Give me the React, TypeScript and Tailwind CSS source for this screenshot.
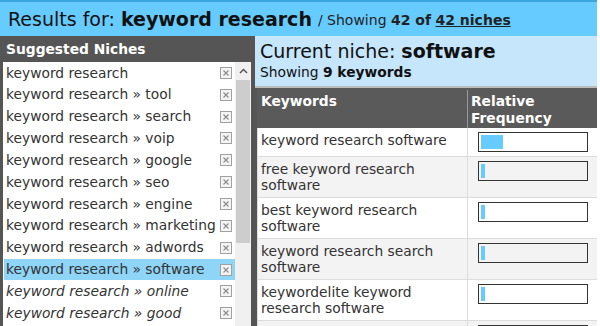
import React from "react";

const NICHES = [
    { label: "keyword research" },
    { label: "keyword research » tool" },
    { label: "keyword research » search" },
    { label: "keyword research » voip" },
    { label: "keyword research » google" },
    { label: "keyword research » seo" },
    { label: "keyword research » engine" },
    { label: "keyword research » marketing" },
    { label: "keyword research » adwords" },
    { label: "keyword research » software", selected: true },
    { label: "keyword research » online", italic: true },
    { label: "keyword research » good", italic: true },
];

// последняя строка уходит за нижний край, видна только рамка шкалы
const KEYWORDS = [
    { text: "keyword research software", freq: 22 },
    { text: "free keyword research software", freq: 4 },
    { text: "best keyword research software", freq: 4 },
    { text: "keyword research search software", freq: 4 },
    { text: "keywordelite keyword research software", freq: 4 },
    { text: "", freq: 4 },
];

function CloseBox() {
    return (
        <svg width="12" height="12" viewBox="0 0 12 12" className="shrink-0">
            <rect x="0.5" y="0.5" width="11" height="11" fill="#f4f4f4" stroke="#a0a0a0" />
            <path d="M3.5 3.5 L8.5 8.5 M8.5 3.5 L3.5 8.5" stroke="#8a8a8a" strokeWidth="1.1" />
        </svg>
    );
}

export default function App() {
    return (
        <div className="w-[597px] h-[326px] overflow-hidden flex flex-col bg-white text-[#333] font-['DejaVu_Sans',Verdana,sans-serif] text-[13.8px]">
            {/* Заголовок результатов */}
            <div className="h-[36px] shrink-0 flex items-center pl-2 bg-[#66ccff] border-t-2 border-[#3aa6e0] text-[#111]">
                <span className="text-[19px]">Results for:&nbsp;</span>
                <span className="text-[19px] font-bold">keyword research</span>
                <span className="ml-[6px] mt-[3px] text-[14px] text-[#222]">
                    / Showing <b>42 of</b> <b className="underline">42 niches</b>
                </span>
            </div>

            <div className="flex flex-1 min-h-0">
                {/* Левая колонка: предложенные ниши */}
                <div className="w-[255px] shrink-0 flex flex-col bg-[#555]">
                    <div className="h-[26px] shrink-0 flex items-center pl-[6px] text-white font-bold">
                        Suggested Niches
                    </div>
                    <div className="flex flex-1 min-h-0 pl-[3px] pr-[4px]">
                        <div className="w-[232px] bg-white pl-[1px]">
                            {NICHES.map((n) => (
                                <div
                                    key={n.label}
                                    className={`h-[21.85px] flex items-center justify-between pl-[2px] pr-[3px] ${n.selected ? "bg-[#8fd5f8]" : ""} ${n.italic ? "italic" : ""}`}
                                >
                                    <span className="whitespace-nowrap">{n.label}</span>
                                    <CloseBox />
                                </div>
                            ))}
                        </div>
                        <div className="w-[16px] bg-[#f0f0f0] flex flex-col">
                            <div className="h-[18px] flex items-center justify-center">
                                <svg width="9" height="6" viewBox="0 0 9 6">
                                    <path d="M1 5 L4.5 1.5 L8 5" fill="none" stroke="#505050" strokeWidth="1.4" />
                                </svg>
                            </div>
                            <div className="mx-[1px] h-[163px] bg-[#cdcdcd]" />
                        </div>
                    </div>
                </div>

                {/* Правая колонка: текущая ниша */}
                <div className="flex-1 flex flex-col min-w-0">
                    <div className="h-[52px] shrink-0 bg-[#c6e6fb] pl-[5px] pt-[4px] text-[#111] border-b-2 border-[#bbb]">
                        <div className="text-[19px] leading-[23px]">
                            Current niche: <b>software</b>
                        </div>
                        <div className="leading-[18px]">
                            Showing <b>9 keywords</b>
                        </div>
                    </div>
                    <div className="flex-1 border-l-2 border-[#555]">
                        <div className="flex h-[40px] bg-[#5a5a5a] text-white font-bold leading-[17px]">
                            <div className="w-[210px] pl-[4px] pt-[5px]">Keywords</div>
                            <div className="flex-1 pl-[3px] pt-[3px] border-l border-[#999] mt-[2px]">
                                <div>Relative</div>
                                <div>Frequency</div>
                            </div>
                        </div>
                        <div className="border-l border-[#ddd]">
                            {KEYWORDS.map((k, i) => (
                                <div
                                    key={i}
                                    className={`flex border-b border-[#dcdcdc] ${i % 2 === 1 ? "bg-[#f3f3f3]" : "bg-white"}`}
                                >
                                    <div className="w-[209px] pl-[3px] pr-[4px] py-[4px] leading-[16px]">
                                        {k.text}
                                    </div>
                                    <div className="flex-1 border-l border-[#dcdcdc] pl-[10px] pr-[9px] py-[4px]">
                                        <div className={`h-[20px] border border-[#333] p-[2px] ${i % 2 === 1 ? "bg-[#f3f3f3]" : "bg-white"}`}>
                                            <div className="h-full bg-[#66ccff]" style={{ width: `${k.freq}px` }} />
                                        </div>
                                    </div>
                                </div>
                            ))}
                        </div>
                    </div>
                </div>
            </div>
        </div>
    );
}
